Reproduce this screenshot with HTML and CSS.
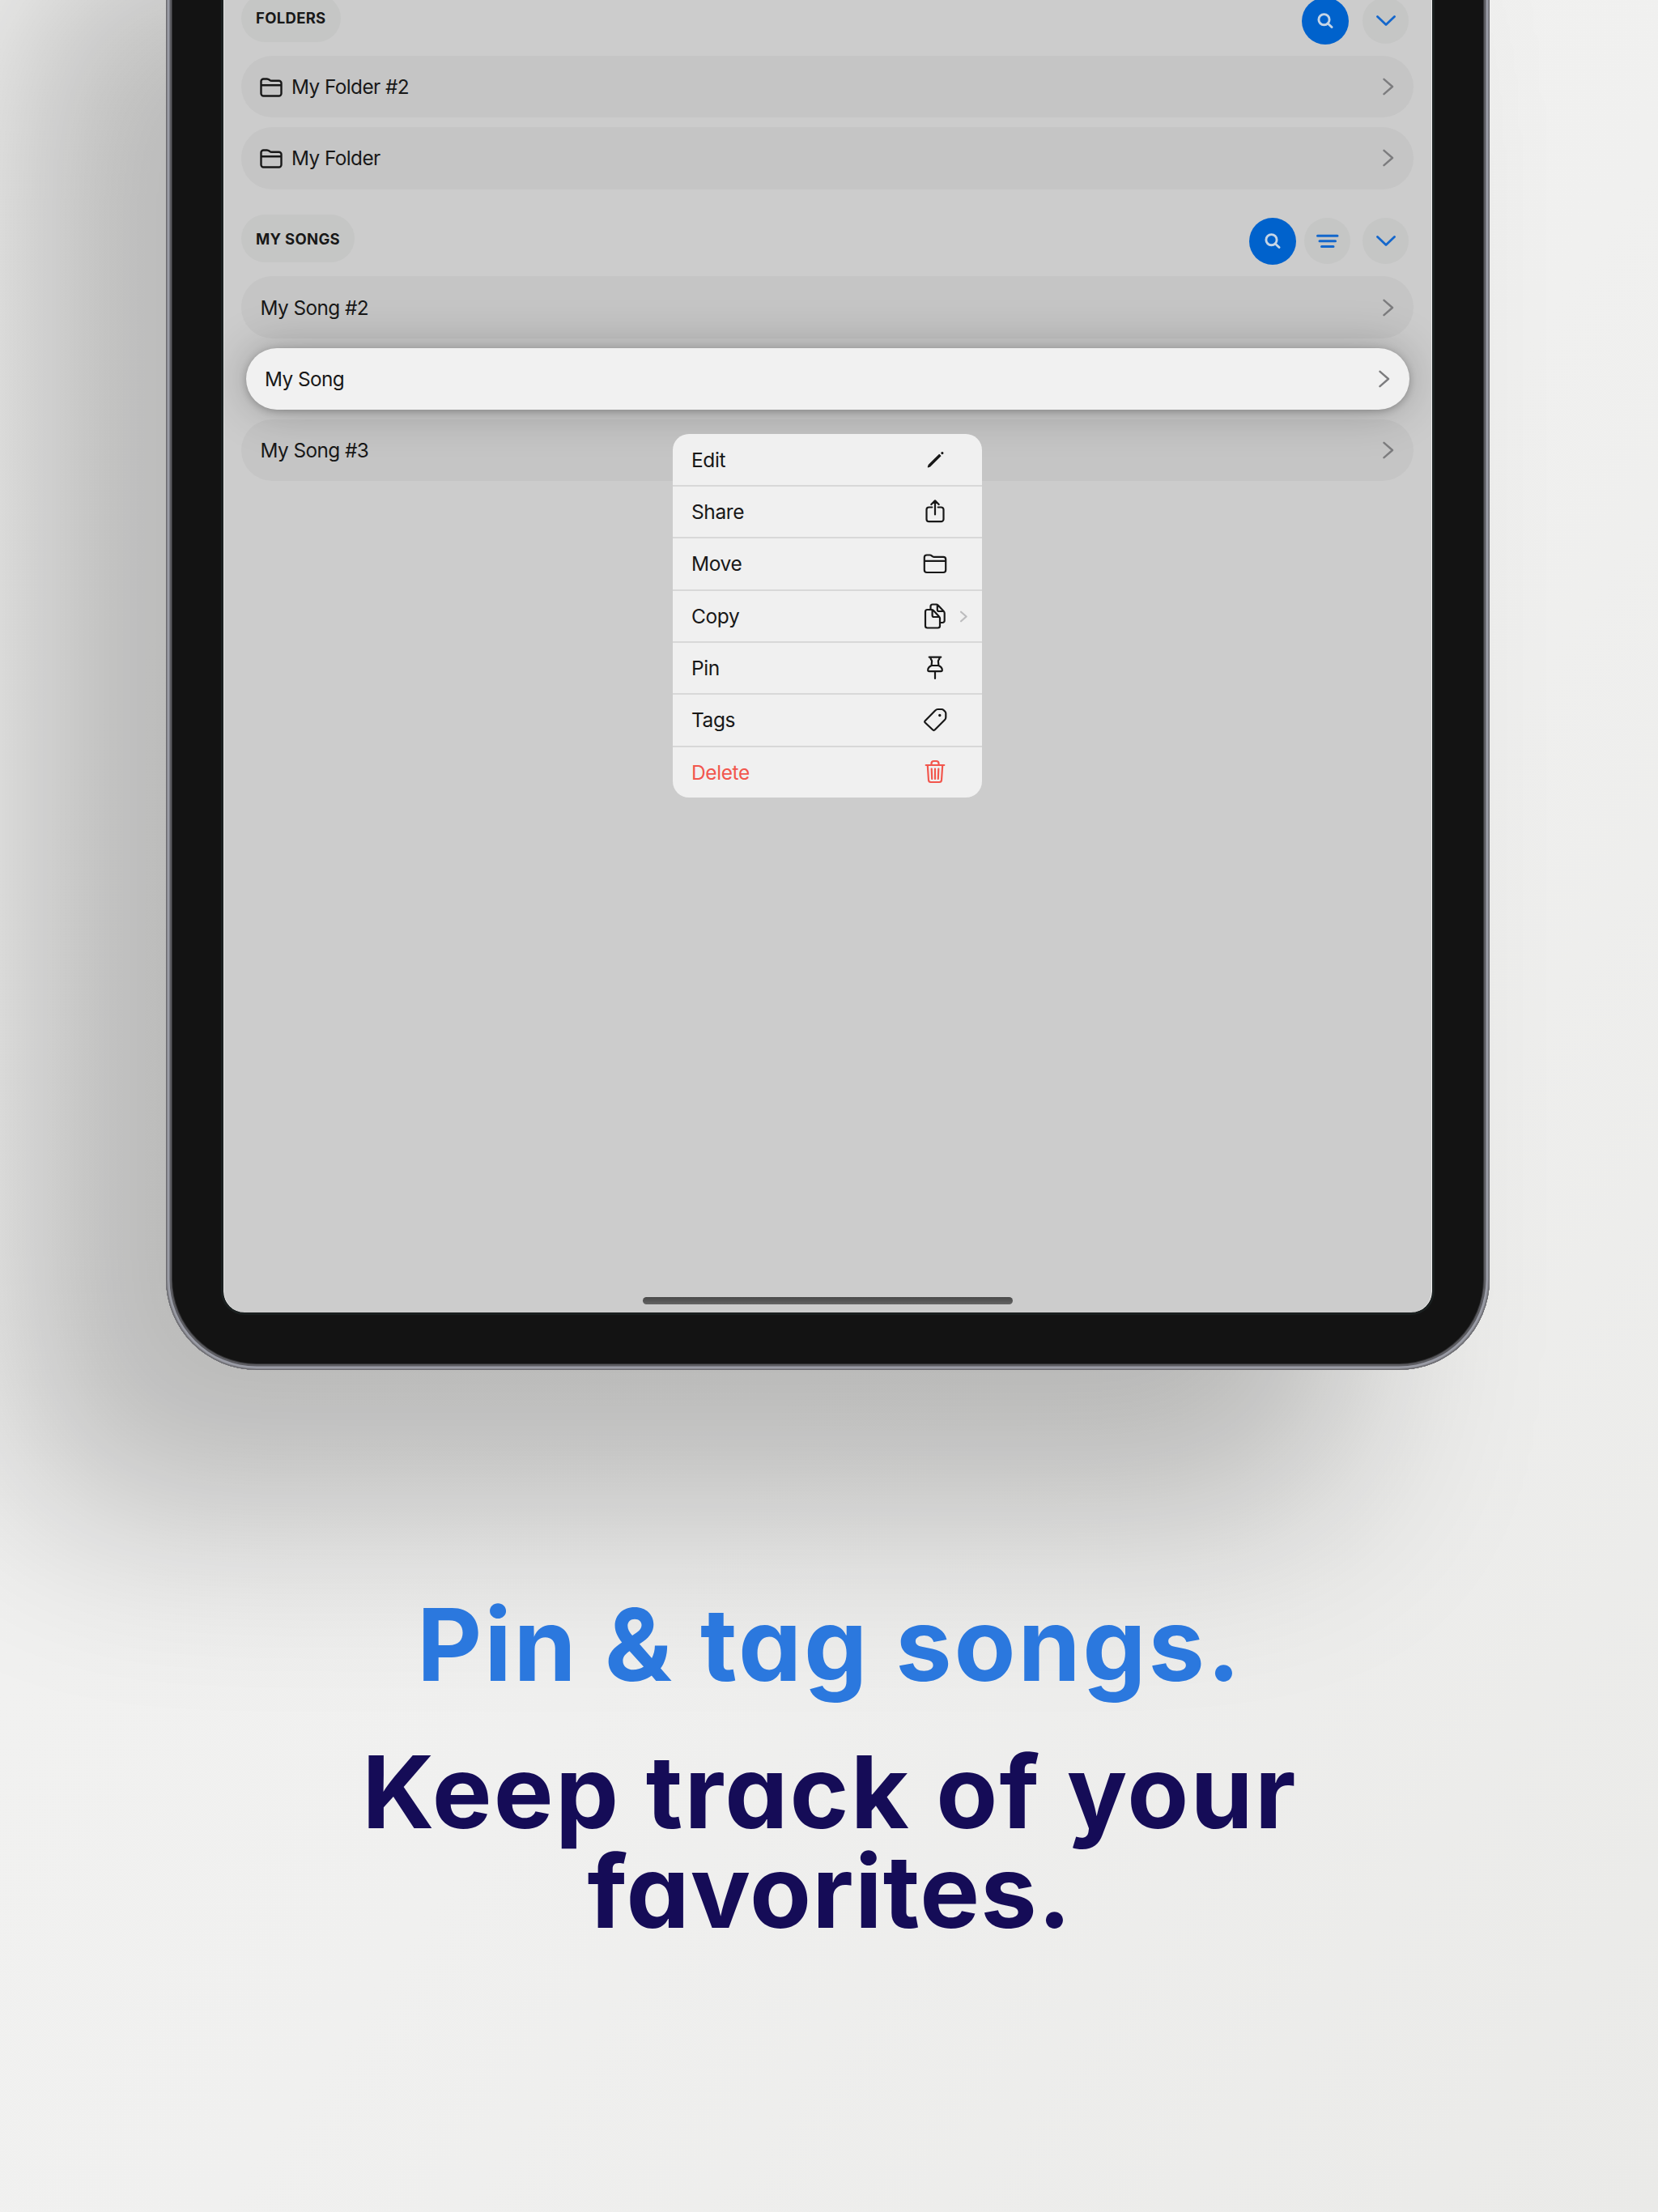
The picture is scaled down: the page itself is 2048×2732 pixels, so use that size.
FILE: index.html
```html
<!DOCTYPE html>
<html lang="en">
<head>
<meta charset="utf-8">
<title>Pin &amp; tag songs</title>
<link rel="stylesheet" href="styles.css">
</head>
<body>
<svg class="defs" width="0" height="0" aria-hidden="true">
  <symbol id="folder" viewBox="0 0 28 24"><path d="M1.500 19.500V4.500a3 3 0 0 1 3-3h4.200c1.600 0 2.300.5 3.300 1.300.9.8 1.500 1 2.700 1H23.500a3 3 0 0 1 3 3v12.700a3 3 0 0 1-3 3H4.500a3 3 0 0 1-3-3zM1.500 9.200h25"/></symbol>
  <symbol id="right" viewBox="0 0 14 24"><path d="M1.500 2.800 12 12 1.500 21.200"/></symbol>
  <symbol id="down" viewBox="0 0 24 14"><path d="M1.500 1.500 12 11.500 22.500 1.500"/></symbol>
  <symbol id="search" viewBox="0 0 20 20"><circle cx="8.500" cy="8.200" r="6.600"/><path d="M13.500 13.200 18 17.500"/></symbol>
  <symbol id="filter" viewBox="0 0 28 18"><path d="M1.500 2.200h24.500M4 8.800h19.500M6.500 15.600h14.500"/></symbol>
</svg>
<main class="stage">
  <div class="device">
    <div class="screen">
      <section class="group">
        <header class="group-head">
          <h2 class="pill">FOLDERS</h2>
          <div class="tools">
            <span class="tool tool-primary"><svg class="i-search"><use href="#search"/></svg></span>
            <span class="tool"><svg class="i-down"><use href="#down"/></svg></span>
          </div>
        </header>
        <div class="row"><svg class="i-folder"><use href="#folder"/></svg><span class="name">My Folder #2</span><svg class="i-right"><use href="#right"/></svg></div>
        <div class="row"><svg class="i-folder"><use href="#folder"/></svg><span class="name">My Folder</span><svg class="i-right"><use href="#right"/></svg></div>
      </section>
      <section class="group">
        <header class="group-head">
          <h2 class="pill">MY SONGS</h2>
          <div class="tools">
            <span class="tool tool-primary tool-tight"><svg class="i-search"><use href="#search"/></svg></span>
            <span class="tool"><svg class="i-filter"><use href="#filter"/></svg></span>
            <span class="tool"><svg class="i-down"><use href="#down"/></svg></span>
          </div>
        </header>
        <div class="row"><span class="name">My Song #2</span><svg class="i-right"><use href="#right"/></svg></div>
        <div class="row row-active"><span class="name">My Song</span><svg class="i-right"><use href="#right"/></svg></div>
        <div class="row"><span class="name">My Song #3</span><svg class="i-right"><use href="#right"/></svg></div>
      </section>
      <div class="menu">
        <div class="item"><span>Edit</span><svg class="icon" viewBox="0 0 32 32"><path class="solid" d="M7.300 24.900 8.300 22.300 21.200 9.500 22.800 11.100 9.900 23.900z"/><circle class="solid" cx="24.900" cy="7.600" r="1"/></svg></div>
        <div class="item"><span>Share</span><svg class="icon" viewBox="0 0 32 32"><path d="M12.300 10.500H8.500a3 3 0 0 0-3 3v11.700a3 3 0 0 0 3 3h15a3 3 0 0 0 3-3V13.500a3 3 0 0 0-3-3h-3.800M16 19.500V2.800M11.300 7 16 2.400 20.700 7"/></svg></div>
        <div class="item"><span>Move</span><svg class="icon" viewBox="0 0 32 32"><path d="M2.800 24V8.500a3 3 0 0 1 3-3h3.700c2.500 0 2.600 2.300 5 2.300h11.700a3 3 0 0 1 3 3V24a3 3 0 0 1-3 3H5.800a3 3 0 0 1-3-3zM2.800 12.800h26.400"/></svg></div>
        <div class="item"><span>Copy</span><svg class="icon" viewBox="0 0 32 32"><path d="M6.500 8h5.300c1 0 1.500.3 2.200 1l7 7.500c.7.700 1 1.200 1 2.200v9.300a2.500 2.500 0 0 1-2.500 2.500h-13A2.500 2.500 0 0 1 4 28V10.500A2.500 2.500 0 0 1 6.500 8zM12.600 8.500v6.500a2 2 0 0 0 2 2h6.800M10.500 7.500V4A2.500 2.500 0 0 1 13 1.500h4.500c1 0 1.500.3 2.200 1l7 7.500c.7.700 1 1.200 1 2.200v9.300a2.500 2.500 0 0 1-2.500 2.500H22.500M18.800 2.200v5.800a2 2 0 0 0 2 2h6"/></svg><svg class="i-more"><use href="#right"/></svg></div>
        <div class="item"><span>Pin</span><svg class="icon" viewBox="0 0 32 32"><path d="M8.700 2.600h14.600M10.500 2.800c-.4 2.700 1.700 3.200 1.600 5l-.5 5.200c-2.600 1.200-4.400 3.600-4.400 5.600 0 1 .5 1.500 1.500 1.500h14.600c1 0 1.500-.5 1.500-1.500 0-2-1.800-4.400-4.400-5.600l-.5-5.200c-.1-1.800 2-2.300 1.600-5M11.600 13h8.800M16 20.500v8.500"/></svg></div>
        <div class="item"><span>Tags</span><svg class="icon" viewBox="0 0 32 32"><path d="M3.500 17.600 16 4.700c1.200-1.200 2-1.700 3.500-1.700h4.700c1 0 1.600.3 2.300 1l1.800 1.800c.7.700 1 1.300 1 2.300v4.800c0 1.500-.4 2.300-1.500 3.400L15.600 28.500c-.8.700-1.500.7-2.300 0l-9.800-9.200c-.6-.6-.6-1.100 0-1.700z"/><circle class="solid" cx="21.800" cy="10.500" r="1.100"/></svg></div>
        <div class="item item-danger"><span>Delete</span><svg class="icon" viewBox="0 0 32 32"><path d="M4.700 7h22.600M11.500 6.500V5a3 3 0 0 1 3-3h3a3 3 0 0 1 3 3v1.500M6.800 7.500 8 25.500a2.700 2.700 0 0 0 2.700 2.500h10.600A2.700 2.700 0 0 0 24 25.500l1.200-18M11.700 11.500l.5 12.500M16 11.500V24M20.300 11.500 19.800 24"/></svg></div>
      </div>
      <div class="home"></div>
    </div>
  </div>
  <div class="copy">
    <h1 class="title">Pin &amp; tag songs.</h1>
    <p class="sub"><span class="line">Keep track of your</span><span class="line line-2">favorites.</span></p>
  </div>
</main>
</body>
</html>
```
FILE: styles.css
```css
* { box-sizing: border-box; }
body { margin: 0; font-family: Inter, "Liberation Sans", sans-serif; color: #181818; }
h1, h2, p { margin: 0; }
svg { display: block; flex: none; fill: none; stroke: currentColor; stroke-width: 2.200; stroke-linecap: round; stroke-linejoin: round; }
.defs { position: absolute; }

.stage { width: 2048px; height: 2732px; overflow: hidden; background: linear-gradient(125deg, #f3f3f2 0%, #f0f0ef 55%, #eaeae8 100%); }

.device {
  width: 1635px; height: 1931.500px; margin: -240px 0 0 204.500px; padding: 240px 70.500px 70.500px 71.500px;
  border-radius: 112px; background: #131313;
  box-shadow: inset 0 0 0 1px #6b6b70, inset 0 0 0 2px #85858b, inset 0 0 0 4.500px #9a9ca6, inset 0 0 0 7px #5c5c61, inset 0 0 0 8px #333335, -180px 172px 250px rgba(6, 5, 0, .24);
}
.screen {
  position: relative; height: 1621px; padding: 0 23px 0 22px; overflow: hidden;
  background: #ccc; border-radius: 0 0 26px 26px; outline: 3px solid #1a1f1f;
  box-shadow: inset 1px 0 #e2e2e2, inset -1px 0 #efefef;
}

.group { display: flex; flex-direction: column; gap: 12px; }
.group + .group { margin-top: 31.800px; }
.group-head { display: flex; justify-content: space-between; height: 59px; margin-bottom: 5px; }
.group:first-child .group-head { margin-top: -7px; }
.pill { display: flex; align-items: center; height: 59px; padding: 0 18px; border-radius: 30px; background: #c5c6c5; font-size: 18.500px; font-weight: 700; letter-spacing: .3px; line-height: 1; }
.tools { display: flex; align-items: center; padding: 2px 6px 0 0; height: 63px; }
.tool { display: flex; align-items: center; justify-content: center; width: 57px; height: 57px; border-radius: 50%; background: #c5c6c5; color: #1467cc; }
.tool-primary { width: 58px; height: 58px; margin-right: 17px; background: #0062cc; color: #c5d5e6; }
.tool-tight { margin-right: 10px; }
.tool-tight + .tool { margin-right: 15px; }

.row { display: flex; align-items: center; height: 76.300px; padding: 0 24px 0 23.500px; border-radius: 38.200px; background: #c5c5c5; font-size: 24.300px; letter-spacing: -.55px; }
.row-active { position: relative; z-index: 1; margin: 0 5.500px; background: #f1f1f1; box-shadow: 0 2px 10px rgba(0, 0, 0, .25), 0 0 56px rgba(0, 0, 0, .25); }
.name { flex: 1; }
.i-folder { width: 28px; height: 24px; margin: 1px 11px 0 -.500px; stroke-width: 2.400; }
.i-right { width: 14px; height: 24px; color: #7c7c7e; stroke-width: 2.400; }
.i-down { width: 24px; height: 14px; stroke-width: 2.800; }
.i-search { width: 20px; height: 20px; stroke-width: 2.900; }
.i-filter { width: 28px; height: 18px; stroke-width: 3; }

.menu { position: absolute; z-index: 2; left: 555px; top: 536px; width: 382px; height: 449px; border-radius: 20px; background: #f0f0f0; overflow: hidden; display: grid; grid-template-rows: 63px repeat(6, 1fr); }
.item { display: flex; align-items: center; justify-content: space-between; position: relative; padding: 0 42px 0 23px; font-size: 24.500px; letter-spacing: -.4px; }
.item + .item { border-top: 2px solid #d8d8d8; }
.item-danger { color: #f2564d; }
.icon { width: 32px; height: 32px; }
.solid { fill: currentColor; stroke-width: 1.200; }
.i-more { position: absolute; right: 18px; top: 24px; width: 9px; height: 15px; color: #bcbcbe; stroke-width: 3.500; }
.home { position: absolute; left: 518px; bottom: 10px; width: 457px; height: 9px; border-radius: 5px; background: linear-gradient(#484848, #646464); }

.copy { padding-left: 2px; text-align: center; font-weight: 660; font-size: 124px; line-height: 123px; font-feature-settings: "cv11"; }
.title { margin-top: 278px; font: inherit; letter-spacing: 2.800px; color: #2b78de; }
.sub { margin-top: 59px; color: #150c57; letter-spacing: 2.200px; }
.line { display: block; }
.line-2 { letter-spacing: 1.200px; }
```
